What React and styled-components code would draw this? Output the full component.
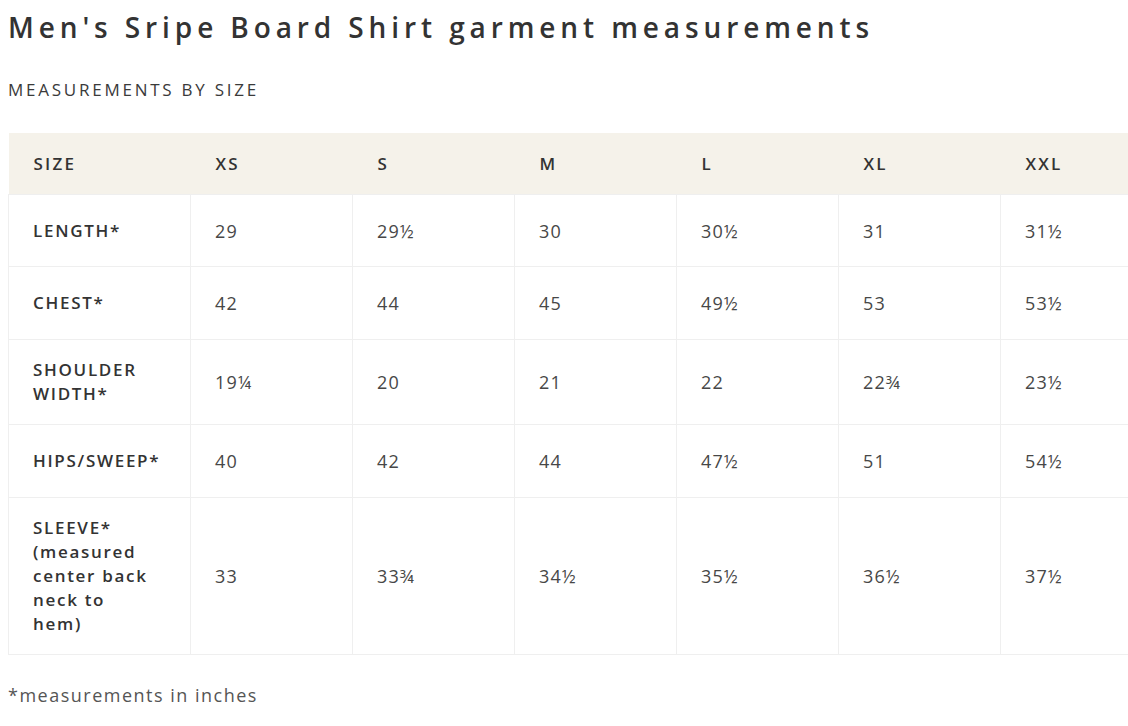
import React from "react";
import styled, { createGlobalStyle } from "styled-components";

const GlobalStyle = createGlobalStyle`
  html, body {
    margin: 0;
    padding: 0;
    background: #fff;
    overflow: hidden;
  }
  body {
    font-family: "Open Sans", "Liberation Sans", sans-serif;
    color: #333;
  }
`;

const Page = styled.div`
  padding: 0 0 0 8px;
  width: 1120px;
  overflow: hidden;
`;

const Title = styled.h1`
  margin: 8px 0 0;
  font-size: 28px;
  line-height: 38px;
  font-weight: 600;
  letter-spacing: 4.9px;
  color: #333;
`;

const Subtitle = styled.h2`
  margin: 32px 0 0;
  font-size: 17px;
  line-height: 24px;
  font-weight: 500;
  letter-spacing: 2.75px;
  color: #3a3a3a;
`;

const Table = styled.table`
  margin-top: 31px;
  border-collapse: collapse;
  table-layout: fixed;
  width: 1154px;
`;

const Col = styled.col`
  width: ${(p) => (p.$first ? 182 : 162)}px;
`;

const HeadRow = styled.tr`
  height: 61px;
  background: #f5f2ea;
`;

const Row = styled.tr`
  height: ${(p) => p.$h}px;
`;

const HeadCell = styled.th`
  box-sizing: border-box;
  padding: 0 25px;
  text-align: left;
  font-size: 17px;
  font-weight: 600;
  letter-spacing: 2.2px;
  color: #333;
`;

const Label = styled.td`
  box-sizing: border-box;
  padding: 18px 34px 17px 24px;
  border: 1px solid #efefef;
  font-size: 17px;
  line-height: 24px;
  font-weight: 600;
  letter-spacing: 1.7px;
  color: #333;
`;

const Value = styled.td`
  box-sizing: border-box;
  padding: 18px 25px 17px 24px;
  border: 1px solid #efefef;
  font-size: 18px;
  line-height: 24px;
  font-weight: 400;
  letter-spacing: 1.1px;
  color: #474747;
`;

const Note = styled.p`
  margin: 28px 0 0;
  font-size: 18px;
  line-height: 24px;
  letter-spacing: 1.5px;
  color: #555;
`;

const sizes = ["XS", "S", "M", "L", "XL", "XXL"];

const rows = [
  { label: "LENGTH*", h: 72, values: ["29", "29½", "30", "30½", "31", "31½"] },
  { label: "CHEST*", h: 73, values: ["42", "44", "45", "49½", "53", "53½"] },
  {
    label: "SHOULDER WIDTH*",
    h: 85,
    values: ["19¼", "20", "21", "22", "22¾", "23½"],
  },
  { label: "HIPS/SWEEP*", h: 73, values: ["40", "42", "44", "47½", "51", "54½"] },
  {
    label: "SLEEVE* (measured center back neck to hem)",
    h: 157,
    values: ["33", "33¾", "34½", "35½", "36½", "37½"],
  },
];

export default function App() {
  return (
    <Page>
      <GlobalStyle />
      <Title>Men's Sripe Board Shirt garment measurements</Title>
      <Subtitle>MEASUREMENTS BY SIZE</Subtitle>
      <Table>
        <colgroup>
          <Col $first />
          {sizes.map((s) => (
            <Col key={s} />
          ))}
        </colgroup>
        <thead>
          <HeadRow>
            <HeadCell>SIZE</HeadCell>
            {sizes.map((s) => (
              <HeadCell key={s}>{s}</HeadCell>
            ))}
          </HeadRow>
        </thead>
        <tbody>
          {rows.map((r) => (
            <Row key={r.label} $h={r.h}>
              <Label>{r.label}</Label>
              {r.values.map((v, i) => (
                <Value key={sizes[i]}>{v}</Value>
              ))}
            </Row>
          ))}
        </tbody>
      </Table>
      <Note>*measurements in inches</Note>
    </Page>
  );
}
